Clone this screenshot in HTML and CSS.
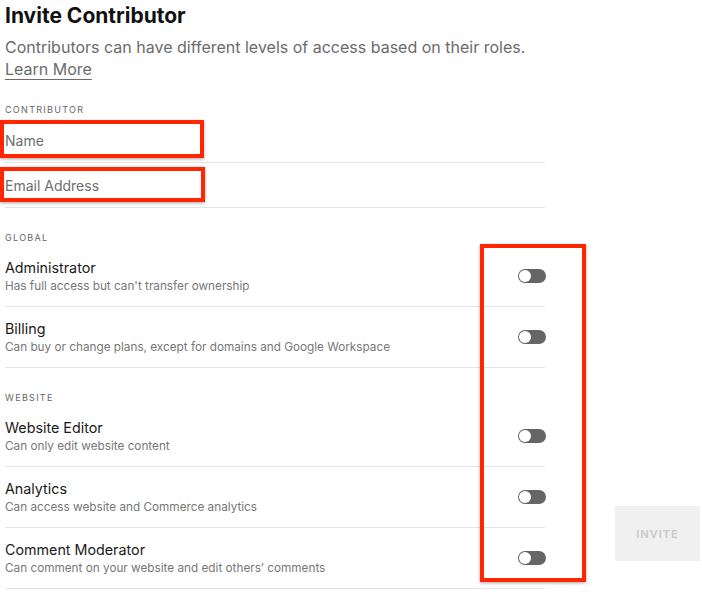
FILE: index.html
```html
<!DOCTYPE html>
<html lang="en">

<head>
    <meta charset="UTF-8">
    <meta name="viewport" content="width=device-width, initial-scale=1.0">
    <title>Invite Contributor</title>
    <link rel="stylesheet" href="styles.css">
</head>

<body>
    <div class="page">
        <div class="invite-panel">
            <h1>Invite Contributor</h1>
            <p class="intro">Contributors can have different levels of access based on their roles.<br>
                <a href="#" class="learn-more">Learn More</a>
            </p>

            <div class="section-label">Contributor</div>
            <div class="field">
                <input type="text" placeholder="Name">
                <span class="mark mark-name"></span>
            </div>
            <div class="field">
                <input type="email" placeholder="Email Address">
                <span class="mark mark-email"></span>
            </div>

            <div class="section-label">Global</div>
            <div class="role">
                <div class="role-text">
                    <div class="role-title">Administrator</div>
                    <div class="role-desc">Has full access but can't transfer ownership</div>
                </div>
                <span class="toggle"></span>
            </div>
            <div class="role">
                <div class="role-text">
                    <div class="role-title">Billing</div>
                    <div class="role-desc">Can buy or change plans, except for domains and Google Workspace</div>
                </div>
                <span class="toggle"></span>
            </div>

            <div class="section-label">Website</div>
            <div class="role">
                <div class="role-text">
                    <div class="role-title">Website Editor</div>
                    <div class="role-desc">Can only edit website content</div>
                </div>
                <span class="toggle"></span>
            </div>
            <div class="role">
                <div class="role-text">
                    <div class="role-title">Analytics</div>
                    <div class="role-desc">Can access website and Commerce analytics</div>
                </div>
                <span class="toggle"></span>
            </div>
            <div class="role">
                <div class="role-text">
                    <div class="role-title">Comment Moderator</div>
                    <div class="role-desc">Can comment on your website and edit others’ comments</div>
                </div>
                <span class="toggle"></span>
            </div>
        </div>

        <button class="invite-btn" disabled>Invite</button>

        <!-- annotation box around the toggles -->
        <span class="mark mark-toggles"></span>
    </div>
</body>

</html>
```

FILE: styles.css
```css
/* Invite Contributor panel */
* {
    box-sizing: border-box;
}

body {
    margin: 0;
    background-color: #fff;
    font-family: Inter, "Noto Sans", sans-serif;
    color: #1a1a1a;
}

.page {
    position: relative;
    display: flex;
    padding-left: 5px;
    width: 702px;
    height: 592px;
    overflow: hidden;
}

.invite-panel {
    width: 540px;
}

h1 {
    margin: 2px 0 0;
    font-size: 21px;
    line-height: 28px;
    font-weight: 700;
    color: #111;
}

.intro {
    margin: 6px 0 0;
    font-size: 16px;
    line-height: 22px;
    color: #6b6b6b;
}

.learn-more {
    color: #6b6b6b;
    text-decoration: underline;
    text-underline-offset: 4px;
}

.section-label {
    margin: 23px 0 1px;
    font-size: 9px;
    line-height: 14px;
    letter-spacing: 1.3px;
    text-transform: uppercase;
    color: #666;
}

.field {
    position: relative;
    height: 45px;
    border-bottom: 1px solid #e5e5e5;
}

.field input {
    display: block;
    width: 100%;
    height: 44px;
    padding: 0;
    border: none;
    outline: none;
    font-family: inherit;
    font-size: 14px;
    color: #1a1a1a;
    background: transparent;
}

.field input::placeholder {
    color: #6e6e6e;
}

.role {
    display: flex;
    align-items: center;
    justify-content: space-between;
    height: 61px;
    padding: 12px 0;
    border-bottom: 1px solid #e5e5e5;
}

.role-title {
    font-size: 14.3px;
    line-height: 20px;
    color: #1a1a1a;
}

.role-desc {
    font-size: 11.75px;
    line-height: 16px;
    color: #777;
}

.toggle {
    position: relative;
    margin-right: -1px;
    width: 28px;
    height: 14px;
    border-radius: 7px;
    background-color: #666;
}

.toggle::after {
    content: "";
    position: absolute;
    left: 1px;
    top: 1px;
    width: 12px;
    height: 12px;
    border-radius: 50%;
    background-color: #fff;
}

.invite-btn {
    align-self: flex-end;
    margin: 0 0 31px 70px;
    width: 85px;
    height: 55px;
    border: none;
    background-color: #f0f0f0;
    color: #c9c9c9;
    font-family: inherit;
    font-size: 11px;
    font-weight: 600;
    letter-spacing: 1px;
    text-transform: uppercase;
}

/* red annotation boxes */
.mark {
    position: absolute;
    border: 4px solid #ff2600;
    box-shadow: 0 1px 3px rgba(0, 0, 0, 0.35);
    pointer-events: none;
}

.mark-name {
    left: -5px;
    top: 2px;
    width: 204px;
    height: 38px;
}

.mark-email {
    left: -5px;
    top: 4px;
    width: 205px;
    height: 35px;
}

.mark-toggles {
    left: 480px;
    top: 244px;
    width: 106px;
    height: 338px;
}
```
